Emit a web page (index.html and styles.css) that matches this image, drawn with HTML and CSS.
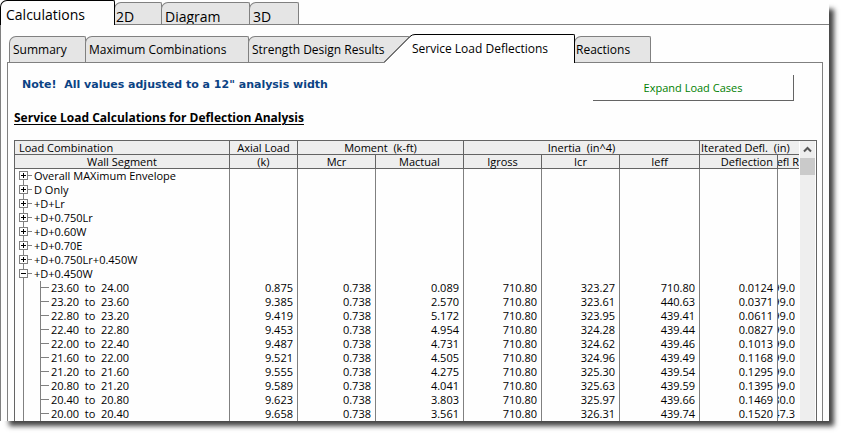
FILE: index.html
```html
<!DOCTYPE html>
<html lang="en">
<head>
<meta charset="utf-8">
<title>Wall calculations</title>
<link rel="stylesheet" href="styles.css">
</head>
<body>
<main class="window">
  <div class="tabs tabs-main" role="tablist">
    <button class="tab active w-calc" role="tab" aria-selected="true">Calculations</button>
    <button class="tab w-2d" role="tab">2D</button>
    <button class="tab w-diagram" role="tab">Diagram</button>
    <button class="tab w-3d" role="tab">3D</button>
  </div>
  <div class="page">
    <div class="tabs tabs-sub" role="tablist">
      <button class="tab w-summary" role="tab">Summary</button>
      <button class="tab w-max" role="tab">Maximum Combinations</button>
      <button class="tab w-strength" role="tab">Strength Design Results</button>
      <button class="tab slanted w-service" role="tab" aria-selected="true">
        <svg class="slant" width="31" height="29" viewBox="0 0 31 29" aria-hidden="true">
          <path d="M0 29 L26 3 Q28.500 .5 31 .5 V29 Z" fill="#fefefe"/>
          <path d="M0 28.500 L26 2.500 Q28 .5 31 .5" fill="none" stroke="#000"/>
        </svg>
        <span>Service Load Deflections</span>
      </button>
      <button class="tab w-reactions" role="tab">Reactions</button>
    </div>
    <section class="panel">
      <div class="toolbar">
        <p class="note">Note!&nbsp; All values adjusted to a 12" analysis width</p>
        <button class="expand">Expand Load Cases</button>
      </div>
      <h1>Service Load Calculations for Deflection Analysis</h1>
      <div class="grid">
        <table>
          <colgroup>
            <col><col class="c68"><col class="c78"><col class="c88"><col class="c78"><col class="c78"><col class="c80"><col class="c78"><col class="c21">
          </colgroup>
          <thead>
            <tr><th class="start">Load Combination</th><th>Axial Load</th><th colspan="2">Moment&nbsp; (k-ft)</th><th colspan="3">Inertia&nbsp; (in^4)</th><th colspan="2" class="iterated">Iterated Defl.&nbsp; (in)</th></tr>
            <tr><th>Wall Segment</th><th>(k)</th><th>Mcr</th><th>Mactual</th><th>Igross</th><th>Icr</th><th>Ieff</th><th class="end">Deflection</th><th class="cut"><span>Defl R</span></th></tr>
          </thead>
          <tbody id="rows"></tbody>
        </table>
        <div class="scroll">
          <button class="up" aria-label="Scroll up"><svg width="9" height="7" viewBox="0 0 9 7"><path d="M1 5.500 L4.500 2 L8 5.500" fill="none" stroke="#555" stroke-width="2"/></svg></button>
          <div class="thumb"></div>
        </div>
      </div>
    </section>
  </div>
</main>
<script src="rows.js"></script>
</body>
</html>
```
FILE: rows.js
```js
const cases = ["Overall MAXimum Envelope", "D Only", "+D+Lr", "+D+0.750Lr", "+D+0.60W", "+D+0.70E", "+D+0.750Lr+0.450W", "+D+0.450W"];
const segments = [
  ["23.60", "24.00", "0.875", "0.738", "0.089", "710.80", "323.27", "710.80", "0.0124", "99.0"],
  ["23.20", "23.60", "9.385", "0.738", "2.570", "710.80", "323.61", "440.63", "0.0371", "99.0"],
  ["22.80", "23.20", "9.419", "0.738", "5.172", "710.80", "323.95", "439.41", "0.0611", "99.0"],
  ["22.40", "22.80", "9.453", "0.738", "4.954", "710.80", "324.28", "439.44", "0.0827", "99.0"],
  ["22.00", "22.40", "9.487", "0.738", "4.731", "710.80", "324.62", "439.46", "0.1013", "99.0"],
  ["21.60", "22.00", "9.521", "0.738", "4.505", "710.80", "324.96", "439.49", "0.1168", "99.0"],
  ["21.20", "21.60", "9.555", "0.738", "4.275", "710.80", "325.30", "439.54", "0.1295", "99.0"],
  ["20.80", "21.20", "9.589", "0.738", "4.041", "710.80", "325.63", "439.59", "0.1395", "99.0"],
  ["20.40", "20.80", "9.623", "0.738", "3.803", "710.80", "325.97", "439.66", "0.1469", "80.0"],
  ["20.00", "20.40", "9.658", "0.738", "3.561", "710.80", "326.31", "439.74", "0.1520", "47.3"]
];

const svg = (w, body) => `<svg width="${w}" height="14" viewBox="0 0 ${w} 14" fill="none" stroke="#808080">${body}</svg>`;

const caseRow = (name, i) => {
  const open = i === cases.length - 1;
  const lines = `<path d="M${i ? "8.5 0V2" : "8.5 2V2"}M8.5 11V14M13 6.500H17"/><rect x="4.500" y="2.500" width="8" height="8"/><path stroke="#000" d="M6 6.500H11${open ? "" : "M8.5 4V9"}"/>`;
  return `<tr><td><div class="tree"><button class="toggle" aria-label="${open ? "Collapse" : "Expand"} ${name}">${svg(18, lines)}</button>${name}</div></td>${"<td></td>".repeat(8)}</tr>`;
};

const segmentRow = ([from, to, ...values]) => {
  const last = values.pop();
  return `<tr><td><div class="tree">${svg(36, '<path d="M8.5 0V14M25.500 0V14M26 6.500H34"/>')}${from}&nbsp; to&nbsp; ${to}</div></td>${values.map(v => `<td>${v}</td>`).join("")}<td class="cut"><span>${last}</span></td></tr>`;
};

document.getElementById("rows").innerHTML = cases.map(caseRow).join("") + segments.map(segmentRow).join("");
```
FILE: styles.css
```css
* { box-sizing: border-box; }

body {
  margin: 0;
  padding: 0 16px 15px 0;
  background: #fff;
  color: #000;
  font: 11px/14px "Open Sans", "Noto Sans", sans-serif;
}

button {
  margin: 0;
  padding: 0;
  border: 0;
  background: none;
  color: inherit;
  font: inherit;
}

svg { display: block; flex: none; }

.window {
  background: #fefefe;
  box-shadow: 7px 7px 5px -2px #444;
}

.tabs {
  display: flex;
  align-items: flex-end;
}

.tab {
  flex: none;
  margin-left: -1px;
  padding-left: 4px;
  border: 1px solid #808080;
  border-bottom: 0;
  border-radius: 7px 2px 0 0;
  background: #e5e5e5;
  text-align: left;
  white-space: nowrap;
}

.tabs-main { height: 24px; font-size: 14px; }
.tabs-main .tab { height: 22px; line-height: 28px; padding-left: 1px; overflow: hidden; }
.tabs-main .tab.active {
  position: relative;
  height: 25px;
  margin: 0 0 -1px;
  padding-left: 5px;
  border-color: #000;
  background: #fefefe;
  line-height: 28px;
}

.w-calc { width: 115px; }
.w-2d { width: 48px; }
.w-diagram { width: 89px; }
.w-3d { width: 50px; }
.tabs-main .w-diagram,
.tabs-main .w-3d { padding-left: 3px; }

.page {
  padding: 10px 6px 0 6px;
  border: 1px solid #808080;
  border-bottom: 0;
  border-right: 0;
}

.tabs-sub {
  height: 27px;
  padding-left: 3px;
  font-size: 12px;
}
.tabs-sub .tab { height: 26px; line-height: 24px; padding-left: 3px; }
.w-summary { width: 77px; }
.w-max { width: 164px; }
.w-strength { width: 162px; }
.w-service { width: 191px; }
.w-reactions { width: 77px; }
.tabs-sub .w-reactions { padding-left: 1px; }

.tabs-sub .slanted {
  position: relative;
  z-index: 1;
  height: 29px;
  margin: 0 0 -1px -26px;
  padding-left: 28px;
  border: 0;
  background: none;
  line-height: 27px;
}
.slanted::before {
  content: "";
  position: absolute;
  inset: 0 0 0 31px;
  border: 1px solid #000;
  border-width: 1px 1px 0 0;
  border-radius: 0 2px 0 0;
  background: #fefefe;
}
.slant { position: absolute; left: 0; top: 0; }
.slanted span { position: relative; }

.panel {
  padding: 12px 5px 0 6px;
  border: 1px solid #808080;
  border-bottom: 0;
}

.toolbar {
  display: flex;
  justify-content: space-between;
  align-items: flex-start;
  padding: 0 23px 0 8px;
}

.note {
  margin: 0;
  color: #0b4384;
  font: bold 11px/20px "DejaVu Sans", sans-serif;
}

.expand {
  width: 201px;
  height: 26px;
  border: 1px solid #646464;
  border-width: 0 1px 1px 0;
  color: #008000;
}

h1 {
  margin: 8px 0 13px;
  font-size: 12px;
  line-height: 18px;
  text-decoration: underline;
  text-decoration-thickness: 1px;
  text-underline-offset: 2px;
}

.grid {
  display: flex;
  border: 1px solid #646464;
  border-bottom: 0;
}

table {
  flex: 1;
  width: 0;
  table-layout: fixed;
  border-spacing: 0;
}
.c21 { width: 21px; }
.c68 { width: 68px; }
.c78 { width: 78px; }
.c80 { width: 80px; }
.c88 { width: 88px; }

th, td {
  height: 14px;
  padding: 0;
  border-right: 1px solid #808080;
  line-height: 14px;
  white-space: nowrap;
}
th {
  border-color: #646464;
  border-bottom: 1px solid #646464;
  background: #eee;
  font-weight: normal;
  line-height: 13px;
  text-align: center;
}
th:last-child, td:last-child { border-right: 0; }
th.start { padding-left: 4px; text-align: left; }
th.end { padding-right: 4px; text-align: right; }
th.iterated { padding-left: 1px; text-align: left; }
td { padding-right: 4px; text-align: right; }
td:first-child { padding: 0; }

.cut { overflow: hidden; }
.cut span { display: flex; justify-content: flex-end; overflow: hidden; }

.tree { display: flex; height: 14px; }
.toggle { margin-right: 1px; }

.scroll {
  width: 17px;
  padding: 0 1px;
  background: linear-gradient(#eee, #eee) 1px 0 / 15px 100% no-repeat;
}
.up {
  display: flex;
  justify-content: center;
  align-items: center;
  width: 100%;
  height: 17px;
}
.thumb { height: 17px; background: #cacaca; }
```
